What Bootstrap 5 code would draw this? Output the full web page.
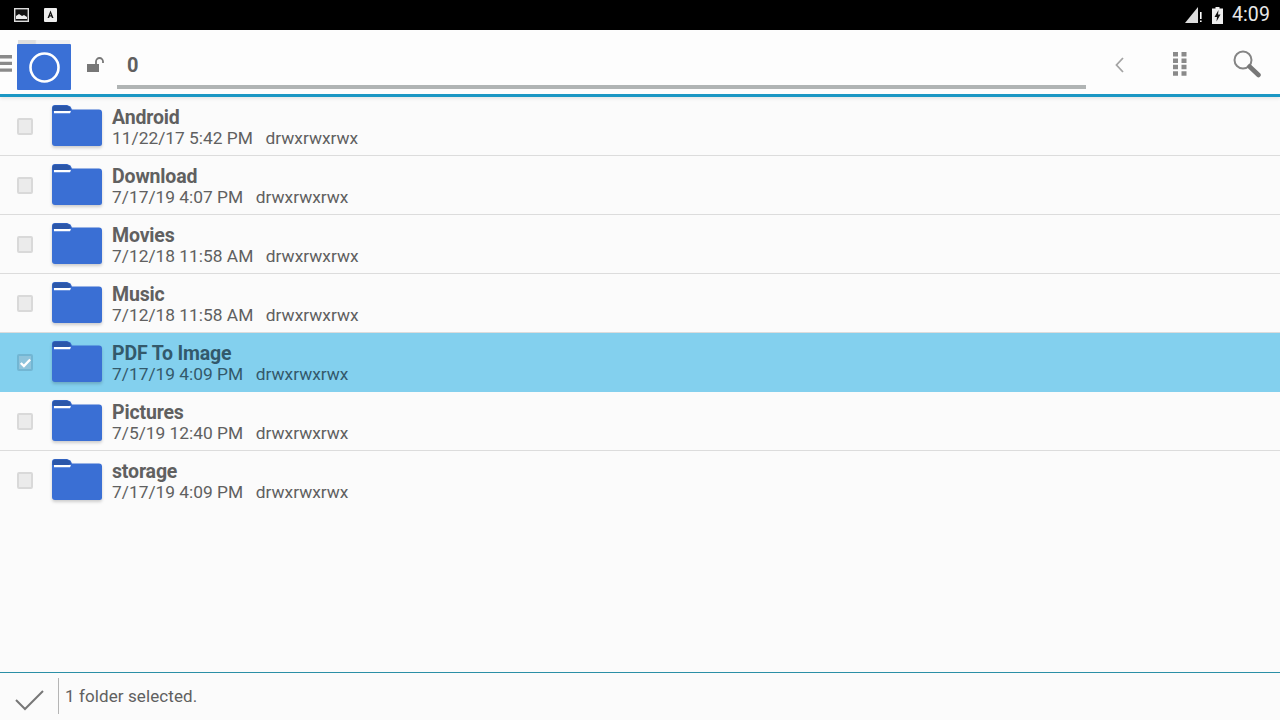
<!DOCTYPE html>
<html lang="en">
<head>
<meta charset="utf-8">
<title>Files</title>
<link href="https://cdn.jsdelivr.net/npm/bootstrap@5.3.0/dist/css/bootstrap.min.css" rel="stylesheet">
<style>
html,body{height:720px;overflow:hidden}
body{background:#fbfbfb;font-family:Roboto,"Liberation Sans",sans-serif;color:#606060}
.app{height:720px}
.stat{height:30px;background:#000;color:#e8e8e8;padding:0 10px 0 14px}
.stat-a{margin-left:15px}
.stat-sig{margin-left:auto}
.stat-bat{margin-left:10px}
.stat-time{font-size:19.500px;line-height:30px;margin-left:9px;letter-spacing:.1px}
.tool{height:67px;background:#fdfdfd;border-bottom:3px solid #1b97c4;box-shadow:0 2px 3px rgba(0,0,0,.08);position:relative}
.burger{width:12px;margin-top:25px;height:17px;flex:none}
.logo{width:54px;height:46px;margin:14px 0 0 5px;flex:none;background:#3a70d6;border-radius:1px;position:relative}
.logo::before{content:"";position:absolute;left:1px;right:1px;top:-4px;height:4px;background:linear-gradient(90deg,#dedede 0,#dedede 33%,#f0f0f0 36%,#f0f0f0 100%)}
.lock{margin:27px 0 0 16px;flex:none}
.pathbox{width:969px;margin-left:12px;flex:none}
.pathtxt{font-size:20px;font-weight:700;line-height:22px;margin:24px 0 0 10px;color:#5f5f5f}
.pathbar{height:4px;background:#b0b4b4;margin-top:9px}
.backic{margin:27px 0 0 29px;flex:none}
.gridic{margin:22px 0 0 49px;flex:none}
.searchic{margin:20px 0 0 46px;flex:none}
.frow{height:59px;border-bottom:1px solid #dcdcdc;padding-left:16.500px}
.frow.on{background:#83d0ee;border-bottom-color:#83d0ee;color:#33596b}
.tick{width:16.500px;height:17px;background:#ebebeb;border:2px solid #d9d9d9;border-radius:2px;flex:none;margin-top:21px}
.frow.on .tick{background:#8fc4dc;border-color:#72b6d3}
.fold{margin:8px 0 0 19px;flex:none;filter:drop-shadow(0 2px 1.500px rgba(0,0,0,.18))}
.ftxt{margin:9px 0 0 10px}
.fname{font-size:19.500px;font-weight:700;line-height:23px;letter-spacing:-.15px}
.fmeta{font-size:17.350px;line-height:19px}
.fmeta span+span{margin-left:12.500px}
.foot{height:48px;border-top:1px solid #2b8fa6;background:#fbfbfb}
.footchk{width:59px;height:36px;margin-top:5px;border-right:1px solid #b5b5b5;flex:none;padding:9px 0 0 15px}
.foottxt{font-size:17px;line-height:46px;margin-left:6px;letter-spacing:.1px}
</style>
</head>
<body>
<div class="app d-flex flex-column">
  <div class="stat d-flex align-items-center">
    <svg width="15" height="14" viewBox="0 0 15 14"><rect x=".7" y=".7" width="13.6" height="12.6" fill="#111" stroke="#ddd" stroke-width="1.4"/><path d="M2 11V8l3-2 3 2 2-1 3 2v2z" fill="#eee"/></svg>
    <svg class="stat-a" width="13" height="14" viewBox="0 0 13 14"><path d="M0 1a1 1 0 0 1 1-1h11a1 1 0 0 1 1 1v12a1 1 0 0 1-1 1H1a1 1 0 0 1-1-1z" fill="#eee"/><path d="M6.500 2.500 3.500 10h1.600l.5-1.500h1.800l.5 1.500h1.600zM6 7.200l.5-1.700.5 1.700z" fill="#111"/></svg>
    <svg class="stat-sig" width="17" height="16" viewBox="0 0 17 16"><path d="M13 0v16H0z" fill="#ddd"/><path d="M15 5h1.600v7H15zM15 13.400h1.600V15H15z" fill="#fff"/></svg>
    <svg class="stat-bat" width="11" height="17" viewBox="0 0 11 17"><path d="M3.500 0h4v1.500H11V17H0V1.500h3.500z" fill="#eee"/><path d="M6.500 3 2.500 10h2.500l-.5 4.500L8.500 7.500H6z" fill="#111"/></svg>
    <span class="stat-time">4:09</span>
  </div>
  <div class="tool d-flex align-items-start">
    <svg class="burger" viewBox="0 0 12 17"><path d="M0 0h12v3.400H0zM0 6.700h12v3.400H0zM0 13.400h12v3.400H0z" fill="#8a8a8a"/></svg>
    <div class="logo d-flex align-items-center justify-content-center">
      <svg width="31" height="31" viewBox="0 0 31 31"><circle cx="15.500" cy="15.500" r="14" fill="none" stroke="#fff" stroke-width="2.600"/></svg>
    </div>
    <svg class="lock" width="18" height="16" viewBox="0 0 18 16"><rect x="0" y="7" width="12" height="8" fill="#777"/><path d="M9 7V4.500a3.500 3.500 0 0 1 7 0V6" fill="none" stroke="#777" stroke-width="1.800"/></svg>
    <div class="pathbox">
      <div class="pathtxt">0</div>
      <div class="pathbar"></div>
    </div>
    <svg class="backic" width="9" height="16" viewBox="0 0 9 16"><path d="M8 1 1.500 8 8 15" fill="none" stroke="#a4a4a4" stroke-width="1.800"/></svg>
    <svg class="gridic" width="14" height="24" viewBox="0 0 14 24"><path d="M0 0h5v4.500H0zM8.500 0h5v4.500h-5zM0 6.400h5v4.500H0zM8.500 6.400h5v4.500h-5zM0 12.800h5v4.500H0zM8.500 12.800h5v4.500h-5zM0 19.200h5v4.500H0zM8.500 19.200h5v4.500h-5z" fill="#8a8a8a"/></svg>
    <svg class="searchic" width="28" height="28" viewBox="0 0 28 28"><circle cx="10" cy="10" r="8.500" fill="none" stroke="#858585" stroke-width="2"/><path d="m16.500 16.500 9 8.500" stroke="#777" stroke-width="4.500" stroke-linecap="round"/></svg>
  </div>
  <svg width="0" height="0" class="position-absolute"><defs><symbol id="fd" viewBox="0 0 50 41"><path d="M0 3a3 3 0 0 1 3-3h12l3.500 1.500 1.500 3h27a3 3 0 0 1 3 3v31a2.500 2.500 0 0 1-2.500 2.500H3a3 3 0 0 1-3-3z" fill="#3a6fd4"/><path d="M.5 6V3Q.5.500 3 .5h12l3 1.500 1 3H18L17 6z" fill="#2b57aa"/><path d="M2 6h16l1 .3-1 2H2z" fill="#fff"/></symbol></defs></svg>
  <div class="flex-grow-1">
    <div class="frow d-flex align-items-start">
      <div class="tick"></div><svg class="fold" width="50" height="41"><use href="#fd"/></svg>
      <div class="ftxt"><div class="fname">Android</div><div class="fmeta"><span>11/22/17 5:42 PM</span><span>drwxrwxrwx</span></div></div>
    </div>
    <div class="frow d-flex align-items-start">
      <div class="tick"></div><svg class="fold" width="50" height="41"><use href="#fd"/></svg>
      <div class="ftxt"><div class="fname">Download</div><div class="fmeta"><span>7/17/19 4:07 PM</span><span>drwxrwxrwx</span></div></div>
    </div>
    <div class="frow d-flex align-items-start">
      <div class="tick"></div><svg class="fold" width="50" height="41"><use href="#fd"/></svg>
      <div class="ftxt"><div class="fname">Movies</div><div class="fmeta"><span>7/12/18 11:58 AM</span><span>drwxrwxrwx</span></div></div>
    </div>
    <div class="frow d-flex align-items-start">
      <div class="tick"></div><svg class="fold" width="50" height="41"><use href="#fd"/></svg>
      <div class="ftxt"><div class="fname">Music</div><div class="fmeta"><span>7/12/18 11:58 AM</span><span>drwxrwxrwx</span></div></div>
    </div>
    <div class="frow on d-flex align-items-start">
      <div class="tick d-flex align-items-center justify-content-center"><svg width="14" height="12" viewBox="0 0 14 12"><path d="m2 6 3.500 3.500L12.500 2" fill="none" stroke="#fff" stroke-width="2.600"/></svg></div><svg class="fold" width="50" height="41"><use href="#fd"/></svg>
      <div class="ftxt"><div class="fname">PDF To Image</div><div class="fmeta"><span>7/17/19 4:09 PM</span><span>drwxrwxrwx</span></div></div>
    </div>
    <div class="frow d-flex align-items-start">
      <div class="tick"></div><svg class="fold" width="50" height="41"><use href="#fd"/></svg>
      <div class="ftxt"><div class="fname">Pictures</div><div class="fmeta"><span>7/5/19 12:40 PM</span><span>drwxrwxrwx</span></div></div>
    </div>
    <div class="frow d-flex align-items-start border-0">
      <div class="tick"></div><svg class="fold" width="50" height="41"><use href="#fd"/></svg>
      <div class="ftxt"><div class="fname">storage</div><div class="fmeta"><span>7/17/19 4:09 PM</span><span>drwxrwxrwx</span></div></div>
    </div>
  </div>
  <div class="foot d-flex align-items-start">
    <div class="footchk"><svg width="29" height="22" viewBox="0 0 29 22"><path d="m1 11 9 9L28 2" fill="none" stroke="#777" stroke-width="2"/></svg></div>
    <div class="foottxt">1 folder selected.</div>
  </div>
</div>
<script src="https://cdn.jsdelivr.net/npm/bootstrap@5.3.0/dist/js/bootstrap.bundle.min.js"></script>
</body>
</html>
